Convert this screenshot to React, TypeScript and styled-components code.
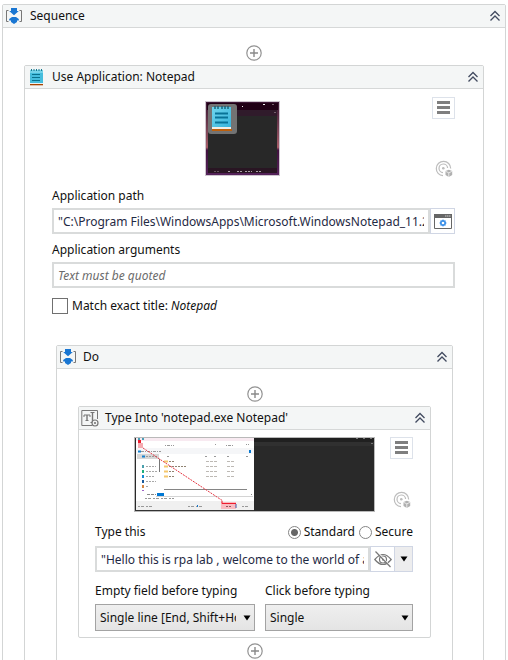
import React, { useState } from "react";
import styled, { createGlobalStyle } from "styled-components";

const GlobalStyle = createGlobalStyle`
  * { box-sizing: border-box; }
  html, body { margin: 0; background: #fff; }
  body, button, input, select {
    font-family: "Noto Sans", "Open Sans", sans-serif;
    font-size: 12px;
    line-height: 16px;
    color: #111;
  }
  button, input, select { margin: 0; }
  svg { display: block; flex: none; }
`;

const Canvas = styled.main`
  height: 100vh;
  overflow: hidden;
  padding: 4px 2px 0;
`;

const Panel = styled.section`
  border: 1px solid #d3d5d5;
  border-radius: 2px;
  background: #fff;
`;

const PanelHeader = styled.header`
  display: flex;
  align-items: center;
  gap: 6px;
  height: 23px;
  padding: 0 4px 0 2px;
  border-bottom: 1px solid #d6d8d8;
  background: #f4f6f6;
`;

const PanelTitle = styled.h2<{ $wide?: boolean }>`
  flex: 1;
  margin: 0;
  padding-left: ${(p) => (p.$wide ? 1 : 0)}px;
  font-size: 12px;
  font-weight: 400;
  line-height: 16px;
  white-space: nowrap;
`;

const IconButton = styled.button`
  display: flex;
  align-items: center;
  justify-content: center;
  padding: 0;
  border: 0;
  background: none;
`;

const Flow = styled.div`
  display: flex;
  flex-direction: column;
  padding: 17px 21px 40px;
`;

const AddButton = styled(IconButton)<{ $last?: boolean }>`
  align-self: center;
  width: 16px;
  height: 16px;
  margin: ${(p) => (p.$last ? "5px 0 0" : "0 0 4px")};
`;

const CardBody = styled.div<{ $inner?: boolean }>`
  display: flex;
  flex-direction: column;
  padding: ${(p) => (p.$inner ? "7px 17px 6px 16px" : "8px 28px 40px 27px")};
`;

const Preview = styled.div<{ $inner?: boolean }>`
  display: grid;
  grid-template-columns: 1fr 23px;
  justify-items: center;
  height: ${(p) => (p.$inner ? 87 : 91)}px;
`;

const Thumb = styled.div<{ $inner?: boolean }>`
  align-self: start;
  justify-self: ${(p) => (p.$inner ? "end" : "center")};
  margin: ${(p) => (p.$inner ? "0 15px 0 0" : "4px 0 0")};
`;

const Tools = styled.div<{ $compact?: boolean }>`
  display: flex;
  flex-direction: column;
  align-items: center;
  gap: ${(p) => (p.$compact ? 32 : 41)}px;
`;

const MenuButton = styled(IconButton)`
  width: 23px;
  height: 22px;
  border: 1px solid #dde2ea;
  background: #fff;
`;

const Label = styled.label`
  line-height: 16px;
  white-space: nowrap;
`;

const InputRow = styled.div`
  display: flex;
  height: 26px;
  margin-bottom: 4px;
`;

const TextInput = styled.input`
  flex: 1;
  min-width: 0;
  height: 26px;
  padding: 0 4px;
  border: 2px solid #d9dbdb;
  border-radius: 0;
  background: #fff;
  color: #1f2a44;
  &::placeholder {
    color: #6b6b6b;
    font-style: italic;
    opacity: 1;
  }
`;

const SideButton = styled(IconButton)<{ $narrow?: boolean }>`
  width: ${(p) => (p.$narrow ? 18 : 25)}px;
  border: 1px solid #d0d6e4;
  border-left-width: ${(p) => (p.$narrow ? 0 : 1)}px;
  background: ${(p) => (p.$narrow ? "#ededee" : "#fff")};
`;

const Field = styled.div`
  display: flex;
  flex-direction: column;
  gap: 4px;
  min-width: 0;
`;

const CheckRow = styled.div`
  display: flex;
  align-items: center;
  gap: 4px;
  margin: 6px 0 31px;
`;

const Checkbox = styled.input`
  appearance: none;
  width: 16px;
  height: 16px;
  border: 1px solid #707070;
  background: #fff;
  &:checked { box-shadow: inset 0 0 0 3px #fff; background: #505050; }
`;

const DoPanel = styled(Panel)`
  margin: 0 2px 0 4px;
`;

const OptionRow = styled.div`
  display: flex;
  align-items: center;
  height: 16px;
  margin-bottom: 6px;
`;

const RadioLabel = styled(Label)`
  display: flex;
  align-items: center;
  gap: 3px;
  margin-left: 4px;
`;

const OptionTitle = styled.span`
  flex: 1;
`;

const Radio = styled.input`
  appearance: none;
  width: 13px;
  height: 13px;
  border: 1px solid #858585;
  border-radius: 50%;
  background: #fff;
  &:checked { background: radial-gradient(circle, #666 0 3px, #fff 4px); }
`;

const SelectGrid = styled.div`
  display: grid;
  grid-template-columns: 160fr 148fr;
  column-gap: 10px;
  margin-top: 7px;
`;

const SelectBox = styled.div`
  position: relative;
  margin-top: 1px;
  svg {
    position: absolute;
    right: 4px;
    top: 11px;
    pointer-events: none;
  }
`;

const Select = styled.select`
  appearance: none;
  display: block;
  width: 100%;
  height: 27px;
  padding: 0 18px 0 4px;
  border: 1px solid #a3a3a3;
  border-radius: 0;
  background: linear-gradient(#efefef, #e4e4e4);
`;

const SequenceIcon = () => (
  <svg width="18" height="18" viewBox="0 0 18 18">
    <path d="M3.500 3.500H1.500v11h2M14.500 3.500h2v11h-2" fill="none" stroke="#777" />
    <path d="M6 1h6v3h1.800L9 8.200 4.200 4H6zM7 10h4l2.800 2v1.500H12V15l-3 2-3-2v-1.500H4.200V12z" fill="#1976d2" />
  </svg>
);

const NotepadIcon = () => (
  <svg width="18" height="18" viewBox="0 0 18 18">
    <path d="M3 2h13v13H3z" fill="#45bddd" />
    <path d="M3 2h13v3H3z" fill="#75d3e9" />
    <path d="M4.500 1v2M7 1v2M9.500 1v2M12 1v2M14.500 1v2" stroke="#147990" />
    <path d="M5 6.500h8M5 9.500h8M5 12.500h8" stroke="#08718d" />
    <path d="M3 15h13v1H3z" fill="#e8f3f5" />
    <path d="M3 16h13v1.300H3z" fill="#a84300" />
  </svg>
);

const TypeIntoIcon = () => (
  <svg width="18" height="18" viewBox="0 0 18 18" fill="none" stroke="#777">
    <path d="M11 16.500H.8V1.500h15.700V10" />
    <path d="M3 8V6h6v2M4.500 11.500h3M9.500 3.500h4M9.500 13.500h2" />
    <path d="M6 6v5.500M11.500 3.500v10" strokeWidth="1.400" />
    <circle cx="14" cy="14" r="3" fill="#f4f6f6" strokeWidth="1.200" />
    <circle cx="14" cy="14" r="1.100" fill="#777" stroke="none" />
  </svg>
);

const ChevronsIcon = () => (
  <svg width="12" height="12" viewBox="0 0 12 12">
    <path d="M1.500 6L6 1.500 10.500 6M1.500 10.500L6 6l4.500 4.500" fill="none" stroke="#424b60" strokeWidth="1.300" />
  </svg>
);

const PlusIcon = () => (
  <svg width="16" height="16" viewBox="0 0 16 16">
    <circle cx="8" cy="8" r="7.200" fill="#fff" stroke="#929292" strokeWidth="1.200" />
    <path d="M8 4v8M4 8h8" stroke="#8a8a8a" strokeWidth="1.400" />
  </svg>
);

const MenuIcon = () => (
  <svg width="13" height="14" viewBox="0 0 13 14">
    <path d="M0 0h13v3H0zM0 5h13v3H0zM0 10h13v3H0z" fill="#7f7f7f" />
  </svg>
);

const TargetIcon = () => (
  <svg width="18" height="18" viewBox="0 0 18 18" fill="none" stroke="#bdbdbd" strokeWidth="1.200">
    <path d="M15.700 8.500A7.200 7.200 0 1 0 8 15.700" />
    <path d="M12.600 8A4.300 4.300 0 1 0 8 12.600" />
    <circle cx="8.300" cy="8.300" r="1.300" fill="#bdbdbd" stroke="none" />
    <path d="M10.500 11l3.300-1.300 3.400 1.300v4l-3.400 2-3.300-2z" fill="#b0b0b0" stroke="none" />
    <path d="M10.500 11.300l3.300 1.500 3.400-1.500M13.800 12.800V17" stroke="#fff" strokeWidth=".7" />
  </svg>
);

const BrowseIcon = () => (
  <svg width="18" height="15" viewBox="0 0 18 15">
    <path d="M.5.5h17v14H.5z" fill="#fff" stroke="#666" />
    <path d="M0 0h18v4H0z" fill="#666" />
    <path d="M11 2h1.500m.5 0h1.500m.5 0h1.500" stroke="#ccc" />
    <circle cx="9" cy="9" r="2.200" fill="#fff" stroke="#3d91e8" strokeWidth="1.700" />
    <path d="M9 5.500v2M9 10.500v2M5.500 9h2M10.500 9h2M6.700 6.700l1 1M10.300 10.300l1 1M11.300 6.700l-1 1M7.700 10.300l-1 1" stroke="#3d91e8" />
  </svg>
);

const EyeOffIcon = () => (
  <svg width="18" height="17" viewBox="0 0 18 17" fill="none" stroke="#777" strokeWidth="1.200">
    <path d="M.8 8.500Q9-1.500 17.200 8.500 9 18.500.8 8.500z" />
    <circle cx="9" cy="8.500" r="3.500" />
    <path d="M8 7.500h2v2H8z" fill="#888" stroke="none" />
    <path d="M2.500 0l14 15.500" stroke="#fff" />
    <path d="M1.500.5l15 15.500" />
  </svg>
);

const ArrowIcon = () => (
  <svg width="8" height="6" viewBox="0 0 8 6">
    <path d="M.5.500h7L4 5.500z" fill="#000" />
  </svg>
);

const AppThumbnail = () => (
  <svg width="75" height="75" viewBox="0 0 75 75" role="img" aria-label="Notepad window">
    <defs>
      <linearGradient id="edge" x1="0" y1="0" x2="0" y2="1">
        <stop offset="0" stopColor="#3b1734" />
        <stop offset=".35" stopColor="#744052" />
        <stop offset=".62" stopColor="#a65c68" />
        <stop offset=".66" stopColor="#40113e" />
        <stop offset="1" stopColor="#55235a" />
      </linearGradient>
      <linearGradient id="page" x1="0" y1="0" x2="1" y2="1">
        <stop offset="0" stopColor="#70d5ec" />
        <stop offset="1" stopColor="#38b4dc" />
      </linearGradient>
    </defs>
    <path d="M0 0h75v75H0z" fill="#cdc5cd" />
    <path d="M1 1h73v73H1z" fill="url(#edge)" />
    <path d="M2 2h71v7H2z" fill="#200015" />
    <path d="M3 9h69v6H3z" fill="#301b2b" />
    <path d="M3 15h69v52H3z" fill="#282828" />
    <path d="M3 67h69v5H3z" fill="#291523" />
    <path d="M37 5.500h1M58 3.500h2" stroke="#eee" />
    <path d="M67 3.500h2M69 11.500h2" stroke="#75606d" />
    <path d="M23 70.500h3M32 70.500h6m2 0h7M51 70.500h6" stroke="#a99fa6" strokeDasharray="2 1" />
    <path d="M9 70.500h5" stroke="#66555f" strokeDasharray="2 1" />
    <rect x="3" y="3" width="29" height="30" rx="3" fill="#737373" />
    <path d="M7 6h19v20H7z" fill="url(#page)" />
    <path d="M10 5v3M13 5v3M17 5v3M20 5v3M23 5v3" stroke="#17647b" strokeWidth="1.500" />
    <path d="M10 12.500h13M10 16.500h13M10 21.500h13" stroke="#087397" strokeWidth="2" />
    <path d="M7 26h19v2H7z" fill="#f3eee6" />
    <path d="M7 28h20v2H7z" fill="#bd600d" />
  </svg>
);

const fileRows = [24, 29, 34, 39];

const TargetThumbnail = () => (
  <svg width="241" height="75" viewBox="0 0 241 75" role="img" aria-label="Type target">
    <path d="M0 0h241v75H0z" fill="#b9b9b9" />
    <path d="M1 1h239v73H1z" fill="#292929" />
    <path d="M120 1h120v4H120z" fill="#202020" />
    <path d="M120 5h120v4H120z" fill="#303030" />
    <path d="M222 1.500h2m5 0h2m5 0h2M237 6.500h2" stroke="#777" />
    <path d="M2 1h118v72H2z" fill="#fff" />
    <path d="M2 1h118v3H2z" fill="#f8eaf1" />
    <path d="M4 2h7" stroke="#4b9eb6" strokeWidth="2" strokeDasharray="2 2" />
    <path d="M2 11h118v6H2z" fill="#f5f6f8" />
    <path d="M2 64h118v9H2z" fill="#f0f0f0" />
    <path d="M3 17h22v5H3z" fill="#d7d7d7" />
    <path d="M31 8.500h9M81 7.500h2M92 8.500h7M112 7.500h3M5 14.500h22" stroke="#999" strokeDasharray="1 1 3 1" />
    <path d="M4 14.500h3M8 19.500h3" stroke="#1681ce" strokeWidth="2" />
    <path d="M12 19.500h11M33 19.500h3M71 19.500h2M80 19.500h3M93 19.500h3M112 19.500h2" stroke="#999" strokeDasharray="2 1" />
    <path d="M115 13h2v3h-2z" fill="#0878cf" />
    <path d="M25 22h1v13h-1z" fill="#777" />
    {fileRows.map((y, i) => (
      <g key={y}>
        <path d={`M30 ${y + 0.5}h4`} stroke="#f4c76c" strokeWidth="2" />
        <path d={`M35 ${y + 0.5}h${[5, 18, 5, 6][i]}`} stroke="#8f8271" strokeDasharray="2 1" />
        <path d={`M72 ${y + 0.5}h12M93 ${y + 0.5}h8`} stroke="#bdb9b4" strokeDasharray="3 1" />
      </g>
    ))}
    {[29, 34, 39, 44, 49].map((y, i) => (
      <g key={y}>
        <path d={`M8 ${y + 0.5}h2`} stroke={["#4a9fac", "#1fb07b", "#168bd1", "#1a5c9c", "#d48743"][i]} strokeWidth="3" />
        <path d={`M12 ${y + 0.5}h${[10, 12, 9, 10, 3][i]}`} stroke="#a8a8a8" strokeDasharray="2 1" />
      </g>
    ))}
    <path d="M8 53.500h2" stroke="#9d62c4" />
    <path d="M30 52.500h83" stroke="#858585" />
    <path d="M13 57.500h9M117 57.500h1" stroke="#888" strokeDasharray="3 1" />
    <path d="M23 56h7v3h-7z" fill="#0078d4" />
    <path d="M22 59.500h97" stroke="#d4d4d4" />
    <path d="M11 61.500h29M4 69.500h14M54 69.500h14M108 69.500h6" stroke="#999" strokeDasharray="2 1 3 2" />
    <path d="M63 68h1v2h-1z" fill="#1976c8" />
    <path d="M4 6h5v5H4z" fill="#f5aab0" />
    <path d="M4 3h3v3H4z" fill="#ed1c2e" />
    <path d="M87 65h15v7H87z" fill="#f9bbc1" />
    <path d="M88 64v2.500h14" fill="none" stroke="#ed1c2e" />
    <path d="M92 69.500h6" stroke="#92575c" strokeDasharray="2 1" />
    <path d="M9 11L27 23 89 64" fill="none" stroke="#e53945" strokeDasharray="2 1" />
    <path d="M102 67v4" stroke="#3d56a3" />
    <path d="M1 73h119v1H1z" fill="#333" />
  </svg>
);

const Header = ({ icon, title, wide }: { icon: React.ReactNode; title: string; wide?: boolean }) => (
  <PanelHeader>
    {icon}
    <PanelTitle $wide={wide}>{title}</PanelTitle>
    <IconButton type="button" aria-label={`Collapse ${title}`}><ChevronsIcon /></IconButton>
  </PanelHeader>
);

const Add = ({ last }: { last?: boolean }) => (
  <AddButton type="button" aria-label="Add activity" $last={last}><PlusIcon /></AddButton>
);

const PreviewTools = ({ compact }: { compact?: boolean }) => (
  <Tools $compact={compact}>
    <MenuButton type="button" aria-label="Options"><MenuIcon /></MenuButton>
    <IconButton type="button" aria-label="Target"><TargetIcon /></IconButton>
  </Tools>
);

const TypeInto = () => {
  const [mode, setMode] = useState("standard");
  return (
    <Panel>
      <Header icon={<TypeIntoIcon />} title="Type Into 'notepad.exe Notepad'" />
      <CardBody $inner>
        <Preview $inner>
          <Thumb $inner><TargetThumbnail /></Thumb>
          <PreviewTools compact />
        </Preview>
        <OptionRow>
          <OptionTitle><Label htmlFor="type-text">Type this</Label></OptionTitle>
          <RadioLabel>
            <Radio type="radio" name="mode" checked={mode === "standard"} onChange={() => setMode("standard")} />
            Standard
          </RadioLabel>
          <RadioLabel>
            <Radio type="radio" name="mode" checked={mode === "secure"} onChange={() => setMode("secure")} />
            Secure
          </RadioLabel>
        </OptionRow>
        <InputRow>
          <TextInput id="type-text" defaultValue={'"Hello this is rpa lab , welcome to the world of automation"'} />
          <SideButton type="button" aria-label="Hide text"><EyeOffIcon /></SideButton>
          <SideButton type="button" aria-label="More input choices" $narrow><ArrowIcon /></SideButton>
        </InputRow>
        <SelectGrid>
          <Field>
            <Label htmlFor="empty-field">Empty field before typing</Label>
            <SelectBox>
              <Select id="empty-field"><option>Single line [End, Shift+Home, Del]</option></Select>
              <ArrowIcon />
            </SelectBox>
          </Field>
          <Field>
            <Label htmlFor="click-before">Click before typing</Label>
            <SelectBox>
              <Select id="click-before"><option>Single</option></Select>
              <ArrowIcon />
            </SelectBox>
          </Field>
        </SelectGrid>
      </CardBody>
    </Panel>
  );
};

export default function App() {
  return (
    <>
      <GlobalStyle />
      <Canvas>
        <Panel>
          <Header icon={<SequenceIcon />} title="Sequence" wide />
          <Flow>
            <Add />
            <Panel>
              <Header icon={<NotepadIcon />} title="Use Application: Notepad" wide />
              <CardBody>
                <Preview>
                  <Thumb><AppThumbnail /></Thumb>
                  <PreviewTools />
                </Preview>
                <Field>
                  <Label htmlFor="app-path">Application path</Label>
                  <InputRow>
                    <TextInput id="app-path" defaultValue={'"C:\\Program Files\\WindowsApps\\Microsoft.WindowsNotepad_11.2307.27.0"'} />
                    <SideButton type="button" aria-label="Browse"><BrowseIcon /></SideButton>
                  </InputRow>
                  <Label htmlFor="app-args">Application arguments</Label>
                  <InputRow>
                    <TextInput id="app-args" placeholder="Text must be quoted" />
                  </InputRow>
                </Field>
                <CheckRow>
                  <Checkbox type="checkbox" id="exact" />
                  <Label htmlFor="exact">Match exact title: <em>Notepad</em></Label>
                </CheckRow>
                <DoPanel>
                  <Header icon={<SequenceIcon />} title="Do" />
                  <Flow>
                    <Add />
                    <TypeInto />
                    <Add last />
                  </Flow>
                </DoPanel>
              </CardBody>
            </Panel>
          </Flow>
        </Panel>
      </Canvas>
    </>
  );
}
